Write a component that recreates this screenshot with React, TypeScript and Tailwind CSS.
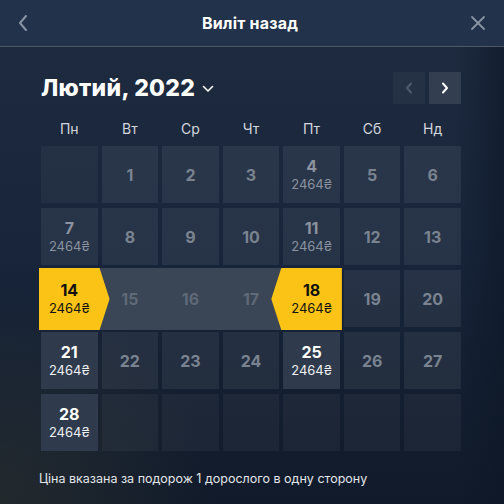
import React, { JSX } from "react";

type DayState = "empty" | "dim" | "start" | "end" | "range" | "active" | "off";

interface IDay {
	day?: number;
	price?: string;
	state: DayState;
}

const PRICE = "2464₴";

const weekDays = ["Пн", "Вт", "Ср", "Чт", "Пт", "Сб", "Нд"];

const priced = [4, 7, 11, 14, 18, 21, 25, 28];

const buildDays = (): IDay[] => {
	const days: IDay[] = [{ state: "empty" }];
	for (let d = 1; d <= 28; d++) {
		let state: DayState = "off";
		if (d < 14) state = "dim";
		else if (d === 14) state = "start";
		else if (d === 18) state = "end";
		else if (d > 14 && d < 18) state = "range";
		else if (d === 21 || d === 25 || d === 28) state = "active";
		days.push({ day: d, price: priced.includes(d) ? PRICE : undefined, state });
	}
	while (days.length < 35) days.push({ state: "empty" });
	return days;
};

const DayCell: React.FC<{ item: IDay }> = ({ item }): JSX.Element => {
	const { day, price, state } = item;

	if (state === "empty") {
		return <div className="h-[57px] bg-white/[0.045]" />;
	}

	if (state === "start" || state === "end") {
		return (
			<div className="relative z-10 h-[57px]">
				{state === "start" ? (
					<div className="absolute -top-[2px] -bottom-[3px] -left-[2px] -right-[12px] bg-[#fbc315] [clip-path:polygon(0_0,calc(100%-10px)_0,100%_50%,calc(100%-10px)_100%,0_100%)]" />
				) : (
					<div className="absolute -top-[2px] -bottom-[3px] -left-[12px] -right-[2px] bg-[#fbc315] [clip-path:polygon(10px_0,100%_0,100%_100%,10px_100%,0_50%)]" />
				)}
				<div className="relative flex h-full flex-col items-center justify-center text-[#111]">
					<span className="text-[16px] font-bold leading-[20px]">{day}</span>
					<span className="text-[13px] leading-[17px]">{price}</span>
				</div>
			</div>
		);
	}

	if (state === "range") {
		return (
			<div className="relative h-[57px]">
				<div className="absolute -top-[2px] -bottom-[3px] -left-[3px] -right-[2px] bg-[#3a4555]" />
				<div className="relative flex h-full items-center justify-center text-[16px] font-bold text-[#5f6977]">
					{day}
				</div>
			</div>
		);
	}

	const bg = state === "active" ? "bg-[#2f3b4c]" : "bg-white/[0.065]";
	const numColor = state === "active" ? "text-white" : price ? "text-[#8b93a0]" : "text-[#7a8390]";
	const priceColor = state === "active" ? "text-[#eef0f3]" : "text-[#8b93a0]";

	return (
		<div className={`flex h-[57px] flex-col items-center justify-center ${bg}`}>
			<span className={`text-[16px] font-bold leading-[20px] ${numColor}`}>{day}</span>
			{price && <span className={`text-[13px] leading-[17px] ${priceColor}`}>{price}</span>}
		</div>
	);
};

export default function App(): JSX.Element {
	const days = buildDays();

	return (
		<div className="relative h-[504px] w-[504px] overflow-hidden bg-gradient-to-b from-[#1f2c40] via-[#18253a] to-[#101a2a] font-['Inter','Noto_Sans','DejaVu_Sans',sans-serif]">
			<div className="pointer-events-none absolute inset-0 bg-[radial-gradient(circle_at_0%_100%,rgba(120,110,60,0.18),transparent_30%)]" />
			<div className="pointer-events-none absolute inset-y-0 right-0 w-[50px] bg-gradient-to-r from-transparent to-[#0c1626]/60" />

			<div className="relative flex h-[47px] items-center justify-between border-b border-[#4a5868] bg-[#22324a] px-[16px]">
				<svg width="14" height="18" viewBox="0 0 14 18" fill="none" className="text-[#8994a3]">
					<path d="M10 2 4 9l6 7" stroke="currentColor" strokeWidth="2" strokeLinecap="round" strokeLinejoin="round" />
				</svg>
				<span className="text-[16px] font-bold tracking-[0.2px] text-white">Виліт назад</span>
				<svg width="16" height="16" viewBox="0 0 16 16" fill="none" className="mr-[2px] text-[#8994a3]">
					<path d="M2 2l12 12M14 2 2 14" stroke="currentColor" strokeWidth="1.8" strokeLinecap="round" />
				</svg>
			</div>

			<div className="relative pl-[41px] pr-[43px]">
				<div className="mt-[25px] flex h-[32px] items-center justify-between">
					<div className="flex items-center gap-[7px]">
						<span className="text-[23px] font-extrabold tracking-[0.3px] text-white">Лютий, 2022</span>
						<svg width="12" height="8" viewBox="0 0 12 8" fill="none" className="mt-[2px] text-white">
							<path d="M1.5 1.5 6 6l4.5-4.5" stroke="currentColor" strokeWidth="1.6" strokeLinecap="round" strokeLinejoin="round" />
						</svg>
					</div>
					<div className="flex gap-[4px]">
						<button className="flex h-[32px] w-[32px] items-center justify-center bg-white/[0.04] text-[#4f5b6b]">
							<svg width="8" height="12" viewBox="0 0 8 12" fill="none">
								<path d="M6 1.5 2 6l4 4.5" stroke="currentColor" strokeWidth="2" strokeLinecap="round" strokeLinejoin="round" />
							</svg>
						</button>
						<button className="flex h-[32px] w-[32px] items-center justify-center bg-[#333f50] text-white">
							<svg width="8" height="12" viewBox="0 0 8 12" fill="none">
								<path d="M2 1.5 6 6l-4 4.5" stroke="currentColor" strokeWidth="2" strokeLinecap="round" strokeLinejoin="round" />
							</svg>
						</button>
					</div>
				</div>

				<div className="mt-[14px] grid h-[22px] grid-cols-7 gap-x-[4px] text-center text-[14px] leading-[22px] text-[#d3d7dd]">
					{weekDays.map((w) => (
						<span key={w}>{w}</span>
					))}
				</div>

				<div className="mt-[6px] grid grid-cols-7 gap-x-[4px] gap-y-[5px]">
					{days.map((item, i) => (
						<DayCell key={i} item={item} />
					))}
				</div>

				<p className="-ml-[2px] mt-[19px] text-[12.5px] leading-[18px] text-[#e3e6ea]">
					Ціна вказана за подорож 1 дорослого в одну сторону
				</p>
			</div>
		</div>
	);
}
